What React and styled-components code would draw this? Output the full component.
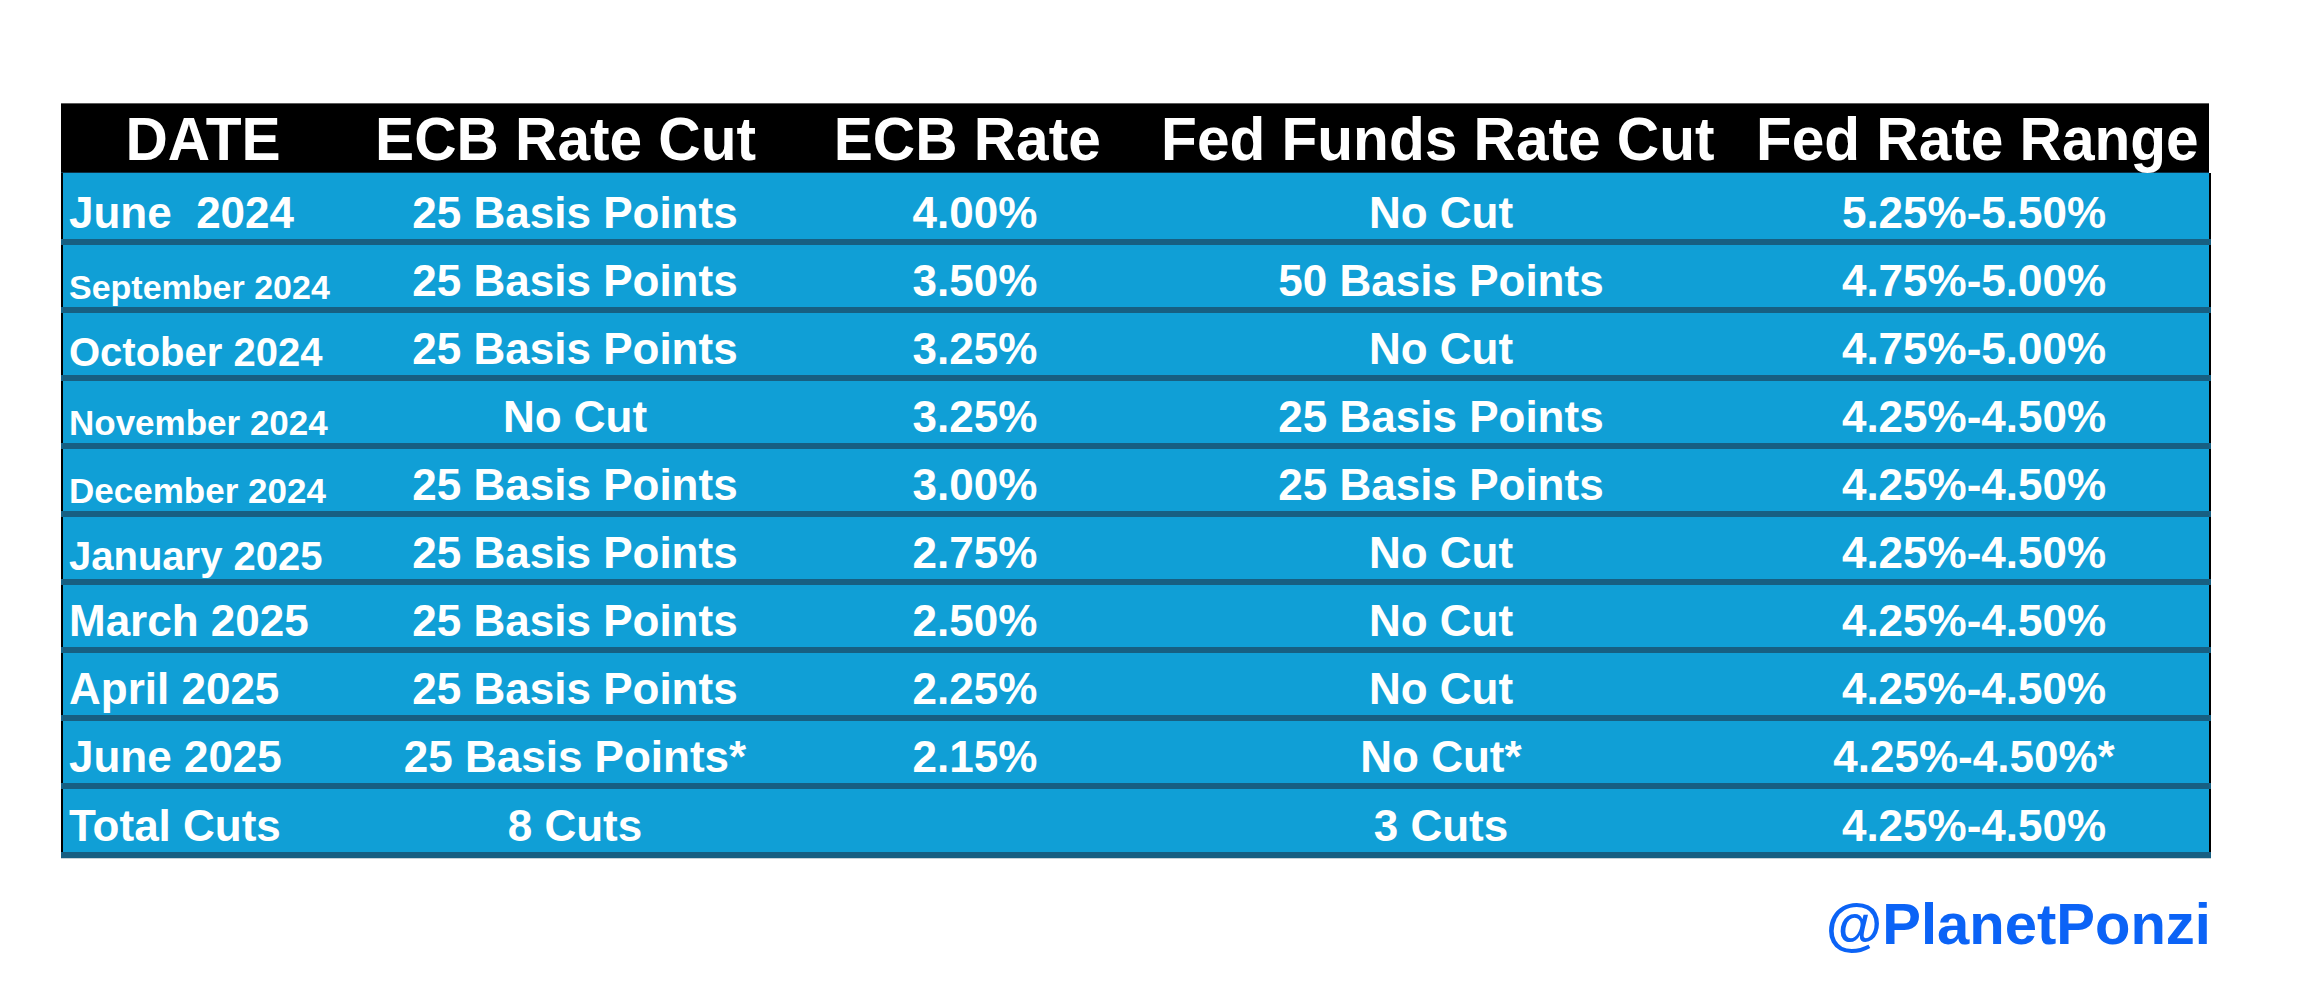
import React from 'react';
import styled, { createGlobalStyle } from 'styled-components';

const GlobalStyle = createGlobalStyle`
    html, body {
        margin: 0;
        padding: 0;
        background: #ffffff;
    }
    body {
        font-family: "Liberation Sans", Arial, Helvetica, sans-serif;
    }
`;

// column widths measured off the sheet (table is 2150px wide incl. borders)
const COLUMNS = '284px 460px 340px 592px 1fr';

const headers = [
    { label: 'DATE', nudge: 0 },
    { label: 'ECB Rate Cut', nudge: -18 },
    { label: 'ECB Rate', nudge: -16 },
    { label: 'Fed Funds Rate Cut', nudge: -6 },
    { label: 'Fed Rate Range', nudge: 6 },
];

const rows = [
    { date: 'June  2024', size: 44, ecbCut: '25 Basis Points', ecbRate: '4.00%', fedCut: 'No Cut', fedRange: '5.25%-5.50%' },
    { date: 'September 2024', size: 34, ecbCut: '25 Basis Points', ecbRate: '3.50%', fedCut: '50 Basis Points', fedRange: '4.75%-5.00%' },
    { date: 'October 2024', size: 40, ecbCut: '25 Basis Points', ecbRate: '3.25%', fedCut: 'No Cut', fedRange: '4.75%-5.00%' },
    { date: 'November 2024', size: 35, ecbCut: 'No Cut', ecbRate: '3.25%', fedCut: '25 Basis Points', fedRange: '4.25%-4.50%' },
    { date: 'December 2024', size: 35, ecbCut: '25 Basis Points', ecbRate: '3.00%', fedCut: '25 Basis Points', fedRange: '4.25%-4.50%' },
    { date: 'January 2025', size: 40, ecbCut: '25 Basis Points', ecbRate: '2.75%', fedCut: 'No Cut', fedRange: '4.25%-4.50%' },
    { date: 'March 2025', size: 44, ecbCut: '25 Basis Points', ecbRate: '2.50%', fedCut: 'No Cut', fedRange: '4.25%-4.50%' },
    { date: 'April 2025', size: 44, ecbCut: '25 Basis Points', ecbRate: '2.25%', fedCut: 'No Cut', fedRange: '4.25%-4.50%' },
    { date: 'June 2025', size: 44, ecbCut: '25 Basis Points*', ecbRate: '2.15%', fedCut: 'No Cut*', fedRange: '4.25%-4.50%*' },
    { date: 'Total Cuts', size: 44, ecbCut: '8 Cuts', ecbRate: '', fedCut: '3 Cuts', fedRange: '4.25%-4.50%' },
];

const App = () => {
    return (
        <Page>
            <GlobalStyle />
            <Sheet>
                <HeaderRow>
                    {headers.map((h) => (
                        <HeadCell key={h.label} $nudge={h.nudge}>
                            <HeadText>{h.label}</HeadText>
                        </HeadCell>
                    ))}
                </HeaderRow>
                {rows.map((r, i) => (
                    <Row key={r.date} $first={i === 0}>
                        <DateCell $size={r.size}>{r.date}</DateCell>
                        <Cell>{r.ecbCut}</Cell>
                        <Cell>{r.ecbRate}</Cell>
                        <Cell>{r.fedCut}</Cell>
                        <Cell>{r.fedRange}</Cell>
                    </Row>
                ))}
            </Sheet>
            <Handle>@PlanetPonzi</Handle>
        </Page>
    );
};

const Page = styled.div`
    width: 2298px;
    min-height: 986px;
    box-sizing: border-box;
    padding: 103px 0 0 61px;
    display: flex;
    flex-direction: column;
    align-items: flex-start;
`;

const Sheet = styled.div`
    width: 2150px;
    display: flex;
    flex-direction: column;
    border-bottom: 1px solid #c9d3d8;
`;

const HeaderRow = styled.div`
    display: grid;
    grid-template-columns: ${COLUMNS};
    height: 68px;
    background: #000000;
    border-top: 1px solid #5a5a5a;
    border-bottom: 1px solid #0d2e42;
    margin-right: 2px;
`;

const HeadCell = styled.div`
    display: flex;
    align-items: center;
    justify-content: center;
    padding-left: ${(p) => (p.$nudge > 0 ? p.$nudge : 0)}px;
    padding-right: ${(p) => (p.$nudge < 0 ? -p.$nudge : 0)}px;
`;

const HeadText = styled.span`
    display: inline-block;
    color: #ffffff;
    font-weight: 700;
    font-size: 62px;
    line-height: 1;
    white-space: nowrap;
    transform: scaleX(0.945);
    margin-top: 2px;
`;

const Row = styled.div`
    display: grid;
    grid-template-columns: ${COLUMNS};
    height: ${(p) => (p.$first ? 66 : 62)}px;
    background: #109fd6;
    border-bottom: 6px solid #175f82;
    box-shadow: inset 2px 0 0 #000000, inset -2px 0 0 #000000;
    &:last-child {
        height: 63px;
    }
`;

const Cell = styled.div`
    display: flex;
    align-items: flex-end;
    justify-content: center;
    color: #ffffff;
    font-weight: 700;
    font-size: 44px;
    line-height: 1.15;
    white-space: pre;
`;

const DateCell = styled(Cell)`
    justify-content: flex-start;
    padding-left: 8px;
    font-size: ${(p) => p.$size}px;
`;

const Handle = styled.div`
    align-self: flex-end;
    margin-right: 87px;
    margin-top: 36px;
    color: #0b63f6;
    font-weight: 700;
    font-size: 58px;
    line-height: 1;
`;

export default App;
